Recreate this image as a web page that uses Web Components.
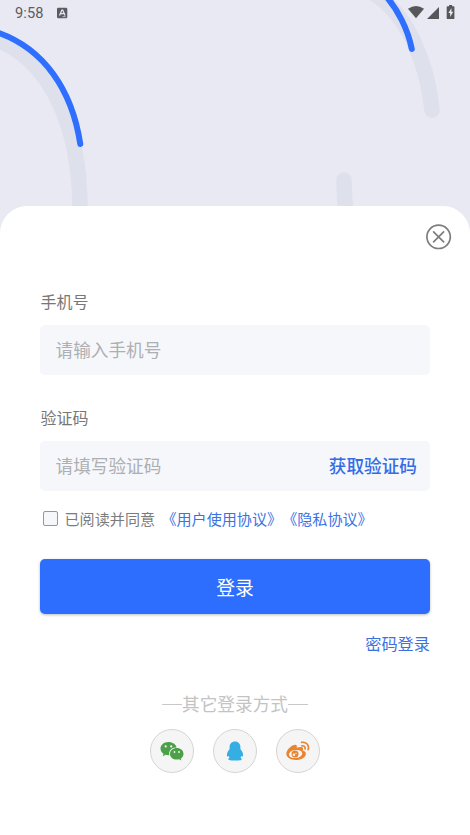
<!DOCTYPE html>
<html lang="zh-CN">
<head>
<meta charset="utf-8">
<title>登录</title>
<style>
html,body{margin:0;height:100%;overflow:hidden}
body{font-family:"Noto Sans CJK SC","Liberation Sans",sans-serif;color:#777}
</style>
</head>
<body>
<login-screen></login-screen>
<script>
const define = (name, html) => {
  const t = document.createElement('template');
  t.innerHTML = html;
  customElements.define(name, class extends HTMLElement {
    constructor() {
      super();
      this.attachShadow({ mode: 'open' }).append(t.content.cloneNode(true));
    }
  });
};

define('status-bar', `
<style>
:host{display:flex;position:relative;align-items:center;height:25px;padding:0 14px 0 15px;font:14.6px/25px Roboto,sans-serif;color:#5b5c61;box-sizing:border-box}
.time{margin-top:2px;width:42px;letter-spacing:.1px}
svg{display:block;flex:none}
.right{margin-left:auto;display:flex;align-items:center}
</style>
<span class="time">9:58</span>
<svg width="11" height="12" viewBox="0 0 11 12"><rect y=".7" width="10.3" height="10.6" rx="1.3" fill="#5b5c61"/><path d="M2.5 8.6 4.9 3h.8l2.4 5.6M3.6 6.6h3.2" fill="none" stroke="#e9eaf2" stroke-width="1.2"/><path d="M5.5 9.7h3.2" stroke="#e9eaf2" stroke-width=".7"/></svg>
<span class="right">
<svg width="48" height="16" viewBox="408 5 48 16" fill="#56575b"><path d="M408 8.7Q416 3.1 424 8.7L416 18.2Z"/><path d="M439 7v12h-12Z"/><path d="M447.5 6.3h1.6V5h3v1.3h1.5q.8 0 .8.8v11.1q0 .9-.8.9h-6.1q-.8 0-.8-.9V7.100q0-.8.8-.8Z"/><path fill="#ececf3" d="m451.500 8-3.100 5.100h1.800V17l3-5.200h-1.800Z"/></svg>
</span>`);

define('arc-backdrop', `
<style>
:host{display:block;position:absolute;inset:0 0 auto 0;height:240px;background:#e8e9f2}
svg{display:block}
path{fill:none;stroke-linecap:round}
</style>
<svg width="470" height="240" viewBox="0 0 470 240">
<g stroke="#dee0eb" stroke-width="15.500">
<path d="M-8 38C48 57 80 122 80 210"/>
<path d="M371-8C406 11 427 61 432 110"/>
<path d="M344 180Q344 198 346.500 218"/>
</g>
<g stroke="#2e6fff" stroke-width="6">
<path d="M-4 32C44 48 72 90 80.300 144"/>
<path d="M384-6C398 9 408 30 411.800 49"/>
</g>
</svg>`);

define('close-button', `
<style>:host{display:block;width:26px;height:26px}svg{display:block}</style>
<svg width="26" height="26" viewBox="0 0 26 26" fill="none" stroke="#7d7d7d" stroke-width="1.700"><circle cx="12.600" cy="12.800" r="11.700"/><path d="m7.600 7.800 10 10M17.600 7.800l-10 10" stroke-linecap="round"/></svg>`);

define('form-field', `
<style>
:host{display:block}
.label{font-size:16px;line-height:24px;height:36px;color:#777;padding-left:.5px}
.box{height:50px;border-radius:5px;background:#f5f7fb;display:flex;align-items:center;justify-content:space-between;padding:0 13px 0 15.500px;font-size:17.650px;line-height:26px;color:#adafb3}
::slotted([slot=action]){color:#346ce6;font-weight:500}
</style>
<div class="label"><slot name="label"></slot></div>
<div class="box"><slot></slot><slot name="action"></slot></div>`);

define('agreement-row', `
<style>
:host{display:flex;align-items:center;height:24px;font-size:15.100px;line-height:24px;color:#7c7c7c;white-space:nowrap}
i{width:13px;height:13px;border:1px solid #96979b;border-radius:2px;background:#f5f7fb;margin:0 7px 0 2.500px;flex:none}
::slotted(a){color:#3b73e4}
::slotted(a:first-of-type){margin-left:6.300px}
</style><i></i><slot></slot>`);

define('primary-button', `
<style>
:host{display:flex;align-items:center;justify-content:center;height:55px;border-radius:5px;background:#2e6eff;color:#fff;font-size:18.800px;line-height:28px;box-shadow:0 1px 3px #0004}
</style><slot></slot>`);

define('section-divider', `
<style>
:host{display:flex;align-items:center;justify-content:center;font-size:17.650px;line-height:26px;color:#c3c3c3;white-space:nowrap}
i{width:20px;height:1px;background:#c8c8c8}
</style><i></i><slot></slot><i></i>`);

define('social-button', `
<style>
:host{display:flex;align-items:center;justify-content:center;width:44px;height:44px;box-sizing:border-box;border:1px solid #d5d5d5;border-radius:50%;background:#f5f5f5}
</style><slot></slot>`);

define('login-sheet', `
<style>
:host{display:flex;flex-direction:column;position:relative;margin-top:181px;height:629px;box-sizing:border-box;background:#fff;border-radius:27px 27px 0 0;padding:18px 40px 0}
close-button{align-self:flex-end;margin-right:-22px}
.phone{margin-top:39px}
.code{margin-top:30px}
agreement-row{margin-top:15px}
primary-button{margin-top:29px}
.pwd{align-self:flex-end;font-size:16.200px;line-height:24px;color:#3972df;margin-top:17px}
section-divider{margin-top:36px}
.social{display:flex;justify-content:center;gap:19px;margin-top:12px}
svg{display:block}
</style>
<close-button></close-button>
<form-field class="phone"><span slot="label">手机号</span>请输入手机号</form-field>
<form-field class="code"><span slot="label">验证码</span>请填写验证码<span slot="action">获取验证码</span></form-field>
<agreement-row><span>已阅读并同意</span><a>《用户使用协议》</a><a>《隐私协议》</a></agreement-row>
<primary-button>登录</primary-button>
<div class="pwd">密码登录</div>
<section-divider>其它登录方式</section-divider>
<div class="social">
<social-button><svg width="24" height="20" viewBox="0 0 24 20"><path fill="#4ca047" d="M8.500 1C3.900 1 .5 3.900.5 7.600c0 2.100 1.200 3.900 3 5.200l-.8 2.500 2.900-1.500c1 .3 2 .4 3 .4h.8c-1.300-4.400 2.300-7.900 7.200-7.700C15.900 3.300 12.500 1 8.500 1Z"/><path fill="#4ca047" d="M16.800 7.100c-3.900 0-6.800 2.600-6.800 5.800s2.900 5.700 6.800 5.700c.8 0 1.600-.1 2.300-.3l2.300 1.200-.6-2c1.600-1.100 2.700-2.700 2.700-4.600 0-3.200-2.900-5.800-6.700-5.800Z"/><g fill="#f5f5f5"><circle cx="5.700" cy="5.400" r="1.100"/><circle cx="11.200" cy="5.400" r="1.100"/><circle cx="14.500" cy="11" r=".9"/><circle cx="19" cy="11" r=".9"/></g></svg></social-button>
<social-button><svg width="18" height="20" viewBox="0 0 18 20"><path fill="#35afe3" d="M9 .5C5.700.5 3.600 2.900 3.600 6v1.900C2.100 9.900.7 12 .9 14.300c.1 1.400.6 1.500 1.700.8.200.7.500 1.200 1 1.700-1 .4-1.400 1.100-1.200 1.700.3.700 1 .9 3 .9h7.200c2 0 2.700-.2 3-.9.200-.6-.2-1.300-1.200-1.700.5-.5.800-1 1-1.700 1.100.7 1.600.6 1.700-.8.200-2.300-1.200-4.400-2.700-6.400V6C14.400 2.900 12.300.5 9 .5Z"/></svg></social-button>
<social-button><svg width="24" height="20" viewBox="0 0 24 20"><path fill="#e98430" d="M9.200 3.800c1.500 0 2 1.100 1.500 3 2.600-1.100 5.900-1.400 6.300.6.100.7 0 1.300-.3 2 2.100.6 3.200 1.700 3.200 3.300 0 3.500-4.500 6.300-9.900 6.300S.3 16.500.3 12.800c0-2.400 1.700-4.700 4.100-6.800 1.700-1.500 3.500-2.200 4.800-2.200Z"/><ellipse cx="9.600" cy="13" rx="6.700" ry="4" transform="rotate(-7 9.600 13)" fill="#f5f5f5"/><circle cx="9" cy="13" r="3.500" fill="#e98430"/><circle cx="7.900" cy="13.800" r="1.300" fill="#f5f5f5"/><circle cx="10" cy="12.400" r=".6" fill="#f5f5f5"/><g fill="none" stroke="#e98430" stroke-linecap="round" stroke-width="1.700"><path d="M15.600 1.400c4.600-.9 7.900 2.900 6.600 7.200"/><path d="M15.900 4.800c2.200-.4 3.700 1.200 3.200 3.200"/></g></svg></social-button>
</div>`);

define('login-screen', `
<style>:host{display:block;position:relative;width:100%;height:835px;overflow:hidden}</style>
<arc-backdrop></arc-backdrop><status-bar></status-bar><login-sheet></login-sheet>`);
</script>
</body>
</html>
